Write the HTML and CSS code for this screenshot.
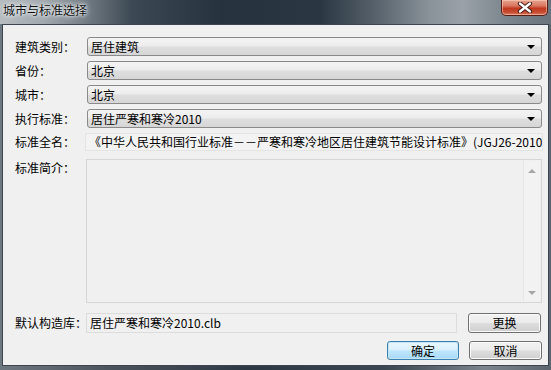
FILE: index.html
```html
<!DOCTYPE html>
<html lang="zh-CN">
<head>
<meta charset="utf-8">
<title>城市与标准选择</title>
<link rel="stylesheet" href="styles.css">
</head>
<body>
<div class="window">
  <div class="titlebar">
    <span class="title">城市与标准选择</span>
    <div class="close">
      <svg width="16" height="11" viewBox="0 0 16 11">
        <path d="M3 1.5 L13 9.5 M13 1.5 L3 9.5" stroke="#3a1410" stroke-width="4.2" stroke-linecap="round"/>
        <path d="M3 1.5 L13 9.5 M13 1.5 L3 9.5" stroke="#ffffff" stroke-width="2.4" stroke-linecap="round"/>
      </svg>
    </div>
  </div>
  <div class="client">
    <div class="row combo-row">
      <span class="label">建筑类别：</span>
      <div class="combo"><span>居住建筑</span><i class="arrow"></i></div>
    </div>
    <div class="row combo-row">
      <span class="label">省份：</span>
      <div class="combo"><span>北京</span><i class="arrow"></i></div>
    </div>
    <div class="row combo-row">
      <span class="label">城市：</span>
      <div class="combo"><span>北京</span><i class="arrow"></i></div>
    </div>
    <div class="row combo-row">
      <span class="label">执行标准：</span>
      <div class="combo"><span>居住严寒和寒冷2010</span><i class="arrow"></i></div>
    </div>
    <div class="row name-row">
      <span class="label">标准全名：</span>
      <div class="fullname">《中华人民共和国行业标准－－严寒和寒冷地区居住建筑节能设计标准》(JGJ26-2010</div>
    </div>
    <div class="row intro-row">
      <span class="label">标准简介：</span>
      <div class="memo">
        <div class="scrollbar">
          <i class="sarrow up"></i>
          <i class="sarrow down"></i>
        </div>
      </div>
    </div>
    <div class="row lib-row">
      <span class="label">默认构造库：</span>
      <div class="libfield">居住严寒和寒冷2010.clb</div>
      <button class="btn">更换</button>
    </div>
    <div class="actions">
      <button class="btn default">确定</button>
      <button class="btn">取消</button>
    </div>
  </div>
</div>
</body>
</html>
```

FILE: styles.css
```css
html, body {
  margin: 0;
  padding: 0;
}
body {
  width: 551px;
  height: 370px;
  overflow: hidden;
  font-family: "Noto Sans CJK SC", "DejaVu Sans", sans-serif;
  font-size: 12px;
  color: #000;
}
.window {
  width: 551px;
  height: 370px;
  display: flex;
  flex-direction: column;
  background: linear-gradient(90deg, #6e7880 0%, #4a545c 20%, #2c3844 45%, #3a4650 70%, #7a848c 88%, #5c666e 100%);
}
.titlebar {
  height: 24px;
  display: flex;
  align-items: flex-start;
  justify-content: space-between;
  background: linear-gradient(90deg, #b6bcc0 0%, #a2a9ae 8%, #7d868d 14%, #3c4853 24%, #26323e 40%, #2a3641 58%, #56616b 68%, #8a939a 78%, #9aa2a8 84%, #7b858d 92%, #6a747c 100%);
}
.title {
  margin: 2px 0 0 3px;
  font-size: 12px;
  line-height: 16px;
  color: #111;
  text-shadow: 0 0 4px #e8eef2, 0 0 6px #dfe6ea, 0 0 2px #fff;
}
.close {
  width: 45px;
  height: 15px;
  margin-right: 3px;
  border: 1px solid #5a1d16;
  border-top: none;
  border-radius: 0 0 5px 5px;
  background: linear-gradient(180deg, #e6a48f 0%, #d8755d 40%, #c0391f 55%, #c64a30 80%, #d97a5c 100%);
  box-shadow: inset 0 0 0 1px rgba(255, 220, 200, 0.5);
  display: flex;
  align-items: center;
  justify-content: center;
}
.client {
  flex: 1;
  margin: 0 2px 4px 2px;
  border: 1px solid #3c4650;
  background: #f0f0f0;
  padding: 12px 5px 0 12px;
  display: flex;
  flex-direction: column;
}
.row {
  display: flex;
  align-items: center;
}
.label {
  width: 72px;
  flex: none;
  line-height: 16px;
}
.combo-row {
  height: 19px;
  margin-bottom: 5px;
}
.combo {
  flex: 1;
  height: 17px;
  margin-right: 1px;
  border: 1px solid #8a8a8a;
  border-radius: 3px;
  background: linear-gradient(180deg, #f4f4f4 0%, #ececec 48%, #dedede 52%, #d6d6d6 100%);
  display: flex;
  align-items: center;
  justify-content: space-between;
  padding: 0 6px 0 3px;
  line-height: 16px;
}
.arrow {
  width: 0;
  height: 0;
  border-left: 4px solid transparent;
  border-right: 4px solid transparent;
  border-top: 4px solid #000;
}
.name-row {
  height: 17px;
  margin-top: 0;
}
.fullname {
  flex: 1;
  height: 16px;
  margin-left: -2px;
  border: 1px solid #e4e4e4;
  background: #f3f3f3;
  padding-left: 3px;
  white-space: nowrap;
  overflow: hidden;
  line-height: 16px;
}
.intro-row {
  margin-top: 9px;
  height: 144px;
  align-items: flex-start;
}
.intro-row .label {
  margin-top: 1px;
}
.memo {
  flex: 1;
  height: 142px;
  margin-left: -1px;
  margin-right: 1px;
  border: 1px solid #d6d6d6;
  background: #f0f0f0;
  display: flex;
  justify-content: flex-end;
}
.scrollbar {
  width: 16px;
  margin: 1px;
  border-left: 1px solid #e6e6e6;
  background: #f2f2f2;
  display: flex;
  flex-direction: column;
  justify-content: space-between;
  align-items: center;
  padding: 8px 0 6px;
}
.sarrow {
  width: 0;
  height: 0;
  border-left: 4px solid transparent;
  border-right: 4px solid transparent;
}
.sarrow.up {
  border-bottom: 4px solid #a6a6a6;
}
.sarrow.down {
  border-top: 4px solid #a6a6a6;
}
.lib-row {
  margin-top: 10px;
  height: 20px;
}
.libfield {
  width: 366px;
  height: 18px;
  margin-left: -1px;
  border: 1px solid #dcdcdc;
  background: #f0f0f0;
  padding-left: 3px;
  line-height: 18px;
  white-space: nowrap;
}
.btn {
  font-family: "Noto Sans CJK SC", "DejaVu Sans", sans-serif;
  font-size: 12px;
  color: #000;
  width: 73px;
  height: 20px;
  padding: 0;
  border: 1px solid #707070;
  border-radius: 3px;
  background: linear-gradient(180deg, #f2f2f2 0%, #ebebeb 48%, #dddddd 52%, #cfcfcf 100%);
  box-shadow: inset 0 0 0 1px #fbfbfb;
  line-height: 16px;
}
.lib-row .btn {
  margin-left: 11px;
}
.actions {
  margin-top: 8px;
  display: flex;
  justify-content: flex-end;
  gap: 10px;
  padding-right: 1px;
}
.actions .btn {
  height: 19px;
}
.actions .default {
  width: 72px;
  border-color: #3c7fb1;
  background: linear-gradient(180deg, #eaf6fd 0%, #d9f0fc 48%, #bee6fd 52%, #a7d9f5 100%);
  box-shadow: inset 0 0 0 1px #c4e5f6;
}
```
